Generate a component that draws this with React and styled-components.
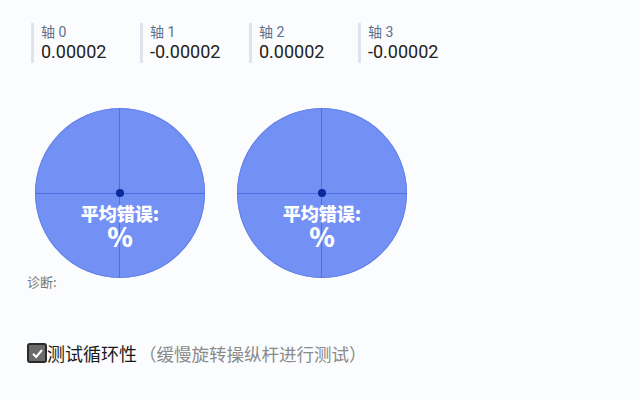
import React from "react";
import styled, { createGlobalStyle } from "styled-components";

const Global = createGlobalStyle`
  html, body {
    margin: 0;
    padding: 0;
    background: #fbfcfd;
    font-family: Roboto, "Noto Sans CJK SC", sans-serif;
  }
`;

const Page = styled.div`
  width: 640px;
  height: 399px;
  overflow: hidden;
  box-sizing: border-box;
  padding: 23px 0 0 27px;
`;

const AxisRow = styled.div`
  display: flex;
  padding-left: 4px;
`;

const Axis = styled.div`
  width: 109px;
  box-sizing: border-box;
  border-left: 3px solid #dfe4ec;
  padding-left: 7px;
  height: 40px;
  display: flex;
  flex-direction: column;
`;

const AxisLabel = styled.div`
  font-size: 14px;
  line-height: 18px;
  color: #5f6f8c;
`;

const AxisValue = styled.div`
  font-size: 18px;
  line-height: 21px;
  color: #222;
`;

const Dials = styled.div`
  display: flex;
  gap: 32px;
  margin: 45px 0 0 8px;
`;

const Dial = styled.div`
  position: relative;
  width: 170px;
  height: 170px;
  border-radius: 50%;
  background: #7391f4;
  box-shadow: inset 0 0 0 1px #6482e6;
  overflow: hidden;
  display: flex;
  flex-direction: column;
  align-items: center;
  padding-top: 95px;
  box-sizing: border-box;
`;

const Line = styled.div`
  position: absolute;
  background: #4f6fe0;
  ${(p) =>
    p.$vertical
      ? "left: 84px; top: 0; bottom: 0; width: 1px;"
      : "top: 85px; left: 0; right: 0; height: 1px;"}
`;

const Dot = styled.div`
  position: absolute;
  left: 81px;
  top: 81px;
  width: 8px;
  height: 8px;
  border-radius: 50%;
  background: #0b2a9c;
`;

const ErrLabel = styled.div`
  position: relative;
  color: #fff;
  font-weight: 900;
  font-size: 18px;
  line-height: 20px;
  font-family: "Noto Sans CJK SC", sans-serif;
`;

const ErrValue = styled.div`
  position: relative;
  color: #fff;
  font-weight: 900;
  font-size: 26px;
  line-height: 26px;
  font-family: "Noto Sans CJK SC", sans-serif;
`;

const Diag = styled.div`
  margin-top: -4px;
  font-size: 13px;
  line-height: 16px;
  color: #777;
  font-family: "Noto Sans CJK SC", sans-serif;
`;

const CheckRow = styled.label`
  display: flex;
  align-items: center;
  margin-top: 50px;
  font-family: "Noto Sans CJK SC", sans-serif;
`;

const Box = styled.span`
  width: 16px;
  height: 16px;
  border: 2px solid #2a2a2a;
  border-radius: 3px;
  background: #6a6a6a;
  display: flex;
  align-items: center;
  justify-content: center;
`;

const CheckText = styled.span`
  font-size: 18px;
  color: #1a1a1a;
`;

const Hint = styled.span`
  font-size: 17.5px;
  color: #8a8a8a;
  margin-left: 2px;
`;

const axes = ["0.00002", "-0.00002", "0.00002", "-0.00002"];

function DialView() {
  return (
    <Dial>
      <Line $vertical />
      <Line />
      <Dot />
      <ErrLabel>平均错误:</ErrLabel>
      <ErrValue>%</ErrValue>
    </Dial>
  );
}

export default function App() {
  return (
    <Page>
      <Global />
      <AxisRow>
        {axes.map((v, i) => (
          <Axis key={i}>
            <AxisLabel>轴 {i}</AxisLabel>
            <AxisValue>{v}</AxisValue>
          </Axis>
        ))}
      </AxisRow>
      <Dials>
        <DialView />
        <DialView />
      </Dials>
      <Diag>诊断:</Diag>
      <CheckRow>
        <Box>
          <svg width="13" height="13" viewBox="0 0 13 13">
            <path d="M2 6.8 L5.2 10 L11 3" fill="none" stroke="#fff" strokeWidth="2" />
          </svg>
        </Box>
        <CheckText>测试循环性</CheckText>
        <Hint>（缓慢旋转操纵杆进行测试）</Hint>
      </CheckRow>
    </Page>
  );
}
